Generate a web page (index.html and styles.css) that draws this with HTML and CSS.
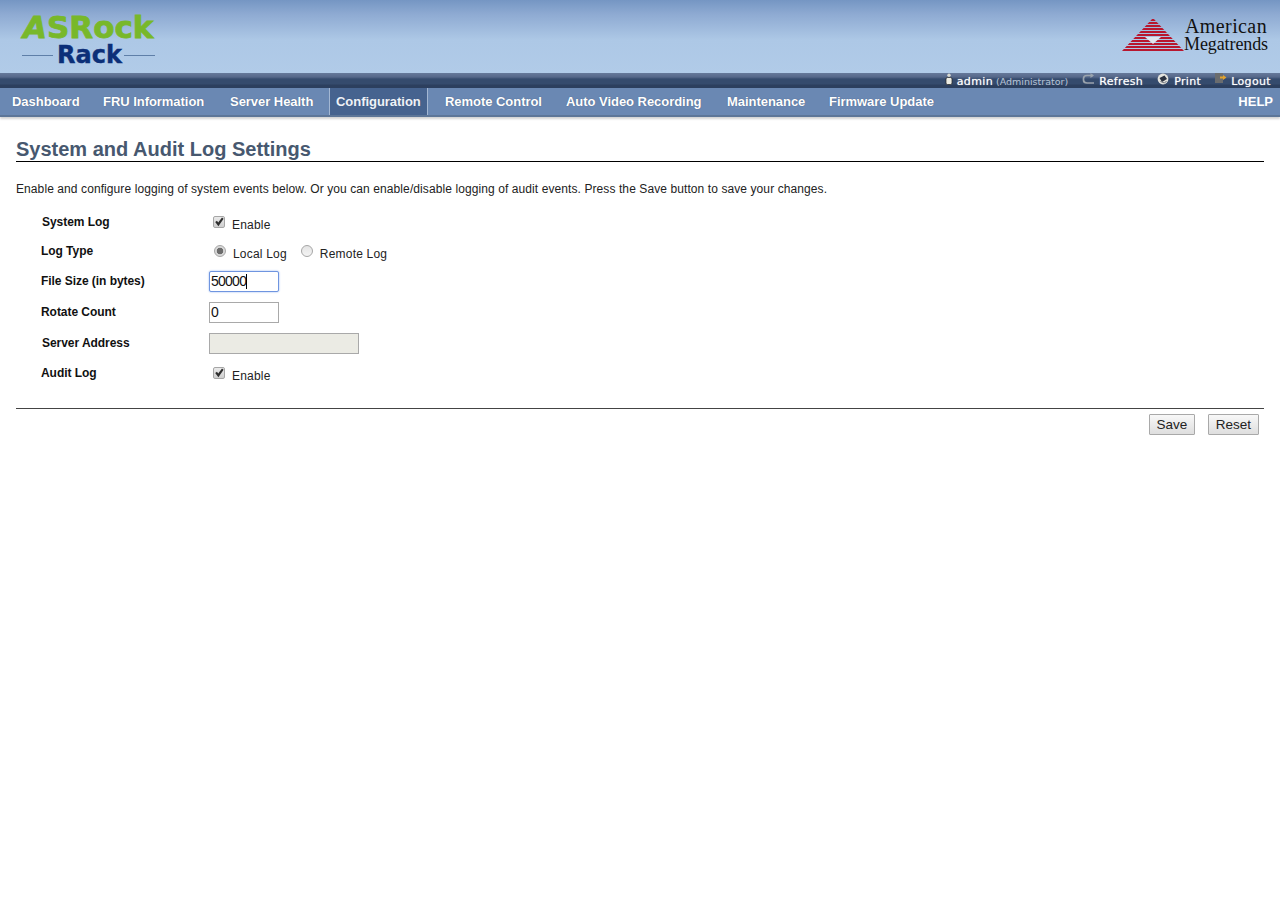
FILE: index.html
```html
<!DOCTYPE html>
<html lang="en">
<head>
<meta charset="utf-8">
<title>System and Audit Log Settings</title>
<link rel="stylesheet" href="styles.css">
</head>
<body>
<header class="banner">
  <div class="logo-row">
    <svg class="logo-asrock" width="140" height="56" viewBox="0 0 140 56" role="img" aria-label="ASRock Rack">
      <text class="asrock-word" x="1" y="25"><tspan class="asrock-a">A</tspan>SRock</text>
      <line x1="0" y1="42.5" x2="31" y2="42.5" class="rack-rule"/>
      <line x1="102" y1="42.5" x2="133" y2="42.5" class="rack-rule"/>
      <text class="rack-word" x="35" y="50">Rack</text>
    </svg>
    <svg class="logo-ami" width="148" height="40" viewBox="0 0 148 40" role="img" aria-label="American Megatrends">
      <defs>
        <clipPath id="ami-tri"><path d="M33 2 L64 35 H2 Z"/></clipPath>
      </defs>
      <g clip-path="url(#ami-tri)">
        <path class="ami-stripes" d="M0 4H66M0 7H66M0 10H66M0 13H66M0 16H66M0 19H66M0 22H66M0 25H66M0 28H66M0 31H66"/>
        <path class="ami-base" d="M0 34H66"/>
        <path class="ami-hole" d="M25 21 H41 L33 28 Z"/>
      </g>
      <text class="ami-word ami-top" x="65" y="17">American</text>
      <text class="ami-word ami-bottom" x="64" y="34">Megatrends</text>
    </svg>
  </div>
  <div class="util-bar">
    <div class="util-links">
      <span class="util-item util-user">
        <svg width="8" height="12" viewBox="0 0 8 12"><circle cx="4" cy="2.2" r="1.7" fill="#d8d8d0"/><rect x="1" y="4.5" width="6" height="7" rx="1.5" fill="#ecece4" stroke="#222" stroke-width=".7"/></svg>
        <b>admin</b><span class="util-role">(Administrator)</span>
      </span>
      <span class="util-item">
        <svg width="13" height="12" viewBox="0 0 13 12"><path d="M11 2.5H5Q1.5 2.5 1.5 5.5V7Q1.5 10 5 10H12" fill="none" stroke="#9aa3ad" stroke-width="1.7"/><path d="M8.500 0L12 2.500L8.500 5Z" fill="#9aa3ad"/></svg>
        <b>Refresh</b>
      </span>
      <span class="util-item util-print">
        <svg width="12" height="12" viewBox="0 0 12 12"><circle cx="6" cy="6" r="5.4" fill="#e4e4de"/><path d="M2.500 5L7.500 2.500L10 6L5 9Z" fill="#2b3240"/><path d="M3.500 8.500L7.500 10L9.500 8" fill="none" stroke="#6a6f78"/></svg>
        <b>Print</b>
      </span>
      <span class="util-item">
        <svg width="12" height="12" viewBox="0 0 12 12"><rect x="0" y="0" width="8" height="10" fill="#6a6c6e"/><path d="M5 3.500H8V2L11.500 4.500L8 7V5.500H5Z" fill="#e2a32e"/></svg>
        <b>Logout</b>
      </span>
    </div>
  </div>
  <nav class="nav">
    <a class="nav-item nav-dashboard">Dashboard</a>
    <a class="nav-item nav-fru">FRU Information</a>
    <a class="nav-item nav-health">Server Health</a>
    <a class="nav-item nav-active">Configuration</a>
    <a class="nav-item nav-remote">Remote Control</a>
    <a class="nav-item nav-video">Auto Video Recording</a>
    <a class="nav-item nav-maint">Maintenance</a>
    <a class="nav-item nav-firmware">Firmware Update</a>
    <a class="nav-help">HELP</a>
  </nav>
</header>
<main class="content">
  <h1 class="page-title">System and Audit Log Settings</h1>
  <p class="intro">Enable and configure logging of system events below. Or you can enable/disable logging of audit events. Press the Save button to save your changes.</p>
  <form class="settings">
    <div class="row row-syslog">
      <span class="label">System Log</span>
      <label class="opt"><input class="check" type="checkbox" checked><span>Enable</span></label>
    </div>
    <div class="row row-logtype">
      <span class="label">Log Type</span>
      <label class="opt"><input class="radio" type="radio" name="t" checked><span>Local Log</span></label>
      <label class="opt opt-second"><input class="radio" type="radio" name="t"><span>Remote Log</span></label>
    </div>
    <div class="row row-size">
      <span class="label label-field">File Size (in bytes)</span>
      <span class="field field-focus">50000<i class="caret"></i></span>
    </div>
    <div class="row row-rotate">
      <span class="label label-field">Rotate Count</span>
      <span class="field">0</span>
    </div>
    <div class="row row-server">
      <span class="label label-field">Server Address</span>
      <span class="field field-wide"></span>
    </div>
    <div class="row row-audit">
      <span class="label">Audit Log</span>
      <label class="opt"><input class="check" type="checkbox" checked><span>Enable</span></label>
    </div>
  </form>
  <div class="actions">
    <button class="btn btn-save" type="button">Save</button>
    <button class="btn btn-reset" type="button">Reset</button>
  </div>
</main>
</body>
</html>
```
FILE: styles.css
```css
* { box-sizing: border-box; }
html, body { margin: 0; padding: 0; }
body { height: 923px; background: #fff; font-family: "Liberation Sans", Arial, sans-serif; font-size: 12px; color: #222; overflow: hidden; }

.banner { height: 119px; }
.logo-row {
  height: 73px; display: flex; justify-content: space-between; align-items: flex-start;
  padding: 0 12px 0 22px;
  background: linear-gradient(#7596c3 0, #8eaad2 14px, #adc8e6 40px, #b1cbe8 73px);
}
.logo-asrock { margin-top: 13px; overflow: visible; }
.logo-ami { margin-top: 16px; overflow: visible; }
.asrock-word { font: bold 31px "DejaVu Sans", sans-serif; fill: #78b82a; stroke: #78b82a; stroke-width: .8; }
.asrock-a { font-style: oblique; }
.rack-word { font: bold 24px "DejaVu Sans", sans-serif; fill: #0c2f78; stroke: #0c2f78; stroke-width: .4; }
.rack-rule { stroke: #5f7fa8; stroke-width: 1; }
.ami-stripes { stroke: #b8172f; stroke-width: 2; fill: none; shape-rendering: crispEdges; }
.ami-base { stroke: #b8172f; stroke-width: 2; fill: none; shape-rendering: crispEdges; }
.ami-hole { fill: #dfe6ef; }
.ami-word { font-family: "Liberation Serif", serif; fill: #111; }
.ami-top { font-size: 20px; letter-spacing: .4px; }
.ami-bottom { font-size: 18px; letter-spacing: -.1px; }

.util-bar {
  height: 15px; display: flex; justify-content: flex-end;
  background: linear-gradient(#66799a 0, #56688a 4px, #354b6d 6px, #354b6d 11px, #2c3f5e 12px, #2c3f5e 15px);
}
.util-links { display: flex; align-items: center; gap: 14px; padding-right: 9px; margin-top: 1px; }
.util-item { display: flex; align-items: center; gap: 4px; font: 11px "DejaVu Sans", sans-serif; color: #fff; white-space: nowrap; }
.util-print { gap: 5px; }
.util-item svg { margin-top: -5px; }
.util-item b { font-weight: 400; letter-spacing: .35px; text-shadow: 0 0 1px rgba(255,255,255,.7); }
.util-role { margin-left: -1px; font-size: 9.5px; color: #b8c4d6; }

.nav {
  height: 29px; display: flex; align-items: stretch;
  background: #6a88b3; border-bottom: 2px solid #5d7698; box-shadow: 0 2px 2px #d4d4d4;
}
.nav-item { display: flex; align-items: center; font: bold 13px "Liberation Sans", Arial, sans-serif; letter-spacing: -.04px; color: #fff; white-space: nowrap; text-shadow: 0 0 1px #43597c; }
.nav-dashboard { margin-left: 12px; width: 91px; }
.nav-fru { width: 127px; }
.nav-health { width: 99px; }
.nav-active { width: 99px; padding-left: 6px; background: #46638f; border: solid #a3b7d3; border-width: 0 1px; color: #eef2f8; }
.nav-remote { margin-left: 17px; width: 121px; }
.nav-video { width: 161px; }
.nav-maint { width: 102px; }
.nav-firmware { flex: none; }
.nav-help { margin-left: auto; padding-right: 7px; display: flex; align-items: center; font: bold 13px "Liberation Sans", Arial, sans-serif; color: #fff; }

.content { padding: 0 16px; }
.page-title { margin: 18px 0 0; height: 25px; font-size: 20px; line-height: 25px; font-weight: bold; color: #47586f; border-bottom: 1px solid #000; }
.intro { margin: 20px 0 0; line-height: 14px; letter-spacing: .09px; color: #222; }

.settings { position: relative; height: 193px; margin-top: 19px; }
.row { display: flex; align-items: flex-start; position: absolute; left: 0; right: 0; }
.label { display: block; width: 193px; padding-left: 25px; font-weight: bold; letter-spacing: -.05px; color: #111; line-height: 14px; }
.label-field { margin-top: 3px; }
.opt { display: inline-flex; align-items: flex-start; line-height: 14px; letter-spacing: .2px; color: #222; }
.opt span { margin-top: 3px; }

.check, .radio {
  appearance: none; -webkit-appearance: none; position: relative; flex: none;
  width: 12px; height: 12px; margin: 1px 7px 0 4px; border: 1px solid #a6a6a6;
  background: linear-gradient(#eaeaea, #cfcfcf);
}
.check { border-radius: 2px; }
.check:checked::after {
  content: ""; position: absolute; inset: 0; background: #2e2e2e;
  clip-path: polygon(12% 50%, 30% 38%, 42% 56%, 80% 6%, 96% 18%, 44% 92%);
}
.radio { margin-left: 5px; border-radius: 50%; background: linear-gradient(#e4e4e4, #f4f4f4); }
.radio:checked { background: radial-gradient(circle at center, #6c6c6c 0 3px, #d9d9d9 3.6px); }
.opt-second { margin-left: 9px; }
.opt-second .radio { margin-left: 5px; }

.field { display: block; width: 70px; height: 21px; border: 1px solid #a9a9a9; padding-left: 1px; font-size: 14px; letter-spacing: -.75px; line-height: 19px; color: #111; background: #fff; }
.field-focus { border-color: #6f95e0; border-radius: 2px; box-shadow: 0 0 2px #8fb0ee; }
.caret { display: inline-block; width: 1px; height: 15px; background: #000; vertical-align: -3px; }
.field-wide { width: 150px; background: #ebebe4; }

.row-syslog { top: 0; }
.row-logtype { top: 29px; }
.row-size { top: 56px; }
.row-rotate { top: 87px; }
.row-server { top: 118px; }
.row-audit { top: 151px; }
.row-syslog .label, .row-server .label { padding-left: 26px; }

.actions { display: flex; justify-content: flex-end; gap: 13px; padding: 5px 5px 0 0; border-top: 1px solid #444; }
.btn { height: 21px; padding: 0; font: 13.5px "Liberation Sans", Arial, sans-serif; color: #222; background: linear-gradient(#f8f8f8, #dedede); border: 1px solid #a9a9a9; border-radius: 1px; }
.btn-save { width: 46px; }
.btn-reset { width: 51px; }
```
